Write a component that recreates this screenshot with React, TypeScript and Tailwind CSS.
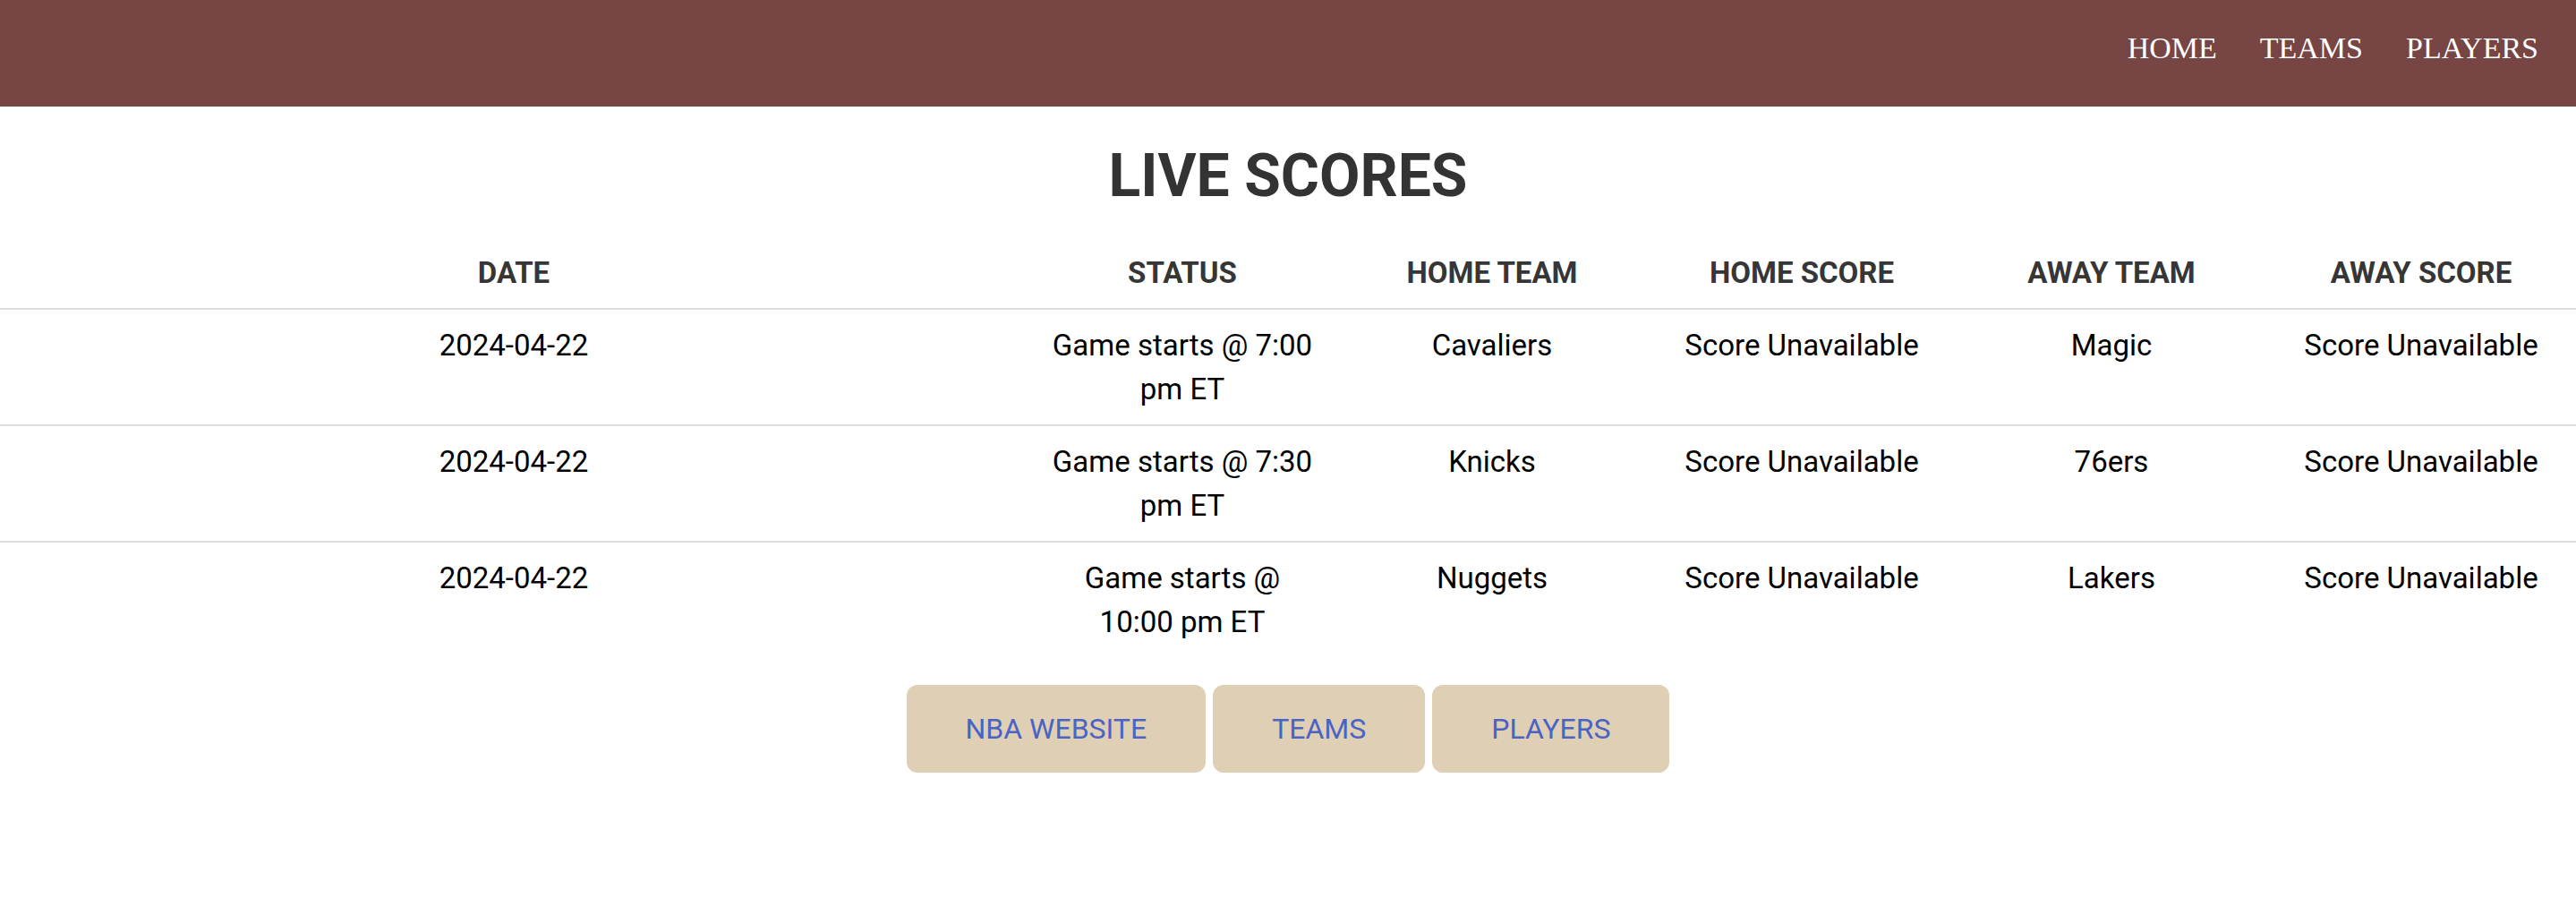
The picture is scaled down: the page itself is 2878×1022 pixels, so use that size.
import React from "react"

const games = [
  {
    date: "2024-04-22",
    status: "Game starts @ 7:00 pm ET",
    homeTeam: "Cavaliers",
    homeScore: "Score Unavailable",
    awayTeam: "Magic",
    awayScore: "Score Unavailable",
  },
  {
    date: "2024-04-22",
    status: "Game starts @ 7:30 pm ET",
    homeTeam: "Knicks",
    homeScore: "Score Unavailable",
    awayTeam: "76ers",
    awayScore: "Score Unavailable",
  },
  {
    date: "2024-04-22",
    status: "Game starts @ 10:00 pm ET",
    homeTeam: "Nuggets",
    homeScore: "Score Unavailable",
    awayTeam: "Lakers",
    awayScore: "Score Unavailable",
  },
]

const headings = ["DATE", "STATUS", "HOME TEAM", "HOME SCORE", "AWAY TEAM", "AWAY SCORE"]

export default function App() {
  return (
    <div className="min-h-screen bg-white font-['Roboto',sans-serif]">
      {/* Top nav */}
      <header className="h-[119px] bg-[#764544] flex items-center justify-end gap-[48px] pr-[42px] pb-[12px]">
        {["HOME", "TEAMS", "PLAYERS"].map((link) => (
          <a
            key={link}
            href="#"
            className="font-['Liberation_Serif',serif] text-[34px] leading-none text-white"
          >
            {link}
          </a>
        ))}
      </header>

      <main>
        <h1 className="mt-[38px] mb-[29px] text-center text-[66px] leading-[79px] font-bold text-[#333333]">
          LIVE SCORES
        </h1>

        <table className="w-full table-fixed border-collapse">
          <colgroup>
            <col />
            <col className="w-[346px]" />
            <col className="w-[346px]" />
            <col className="w-[346px]" />
            <col className="w-[346px]" />
            <col className="w-[346px]" />
          </colgroup>
          <thead>
            <tr>
              {headings.map((h) => (
                <th
                  key={h}
                  className="border-b-2 border-[#dcdcdc] px-[22px] py-[15px] text-center text-[33px] leading-[49px] font-bold text-[#363636]"
                >
                  {h}
                </th>
              ))}
            </tr>
          </thead>
          <tbody>
            {games.map((game, i) => (
              <tr key={i}>
                {[game.date, game.status, game.homeTeam, game.homeScore, game.awayTeam, game.awayScore].map(
                  (value, j) => (
                    <td
                      key={j}
                      className={
                        i < games.length - 1
                          ? "border-b-2 border-[#dcdcdc] px-[22px] py-[15px] align-top text-center text-[33px] leading-[49px] text-black"
                          : "px-[22px] py-[15px] align-top text-center text-[33px] leading-[49px] text-black"
                      }
                    >
                      {value}
                    </td>
                  )
                )}
              </tr>
            ))}
          </tbody>
        </table>

        {/* Links */}
        <div className="mt-[31px] flex justify-center gap-2">
          {["NBA WEBSITE", "TEAMS", "PLAYERS"].map((label) => (
            <a
              key={label}
              href="#"
              className="h-[98px] px-[66px] flex items-center rounded-[12px] bg-[#dfcfb5] text-[32px] text-[#4a63c5]"
            >
              {label}
            </a>
          ))}
        </div>
      </main>
    </div>
  )
}
